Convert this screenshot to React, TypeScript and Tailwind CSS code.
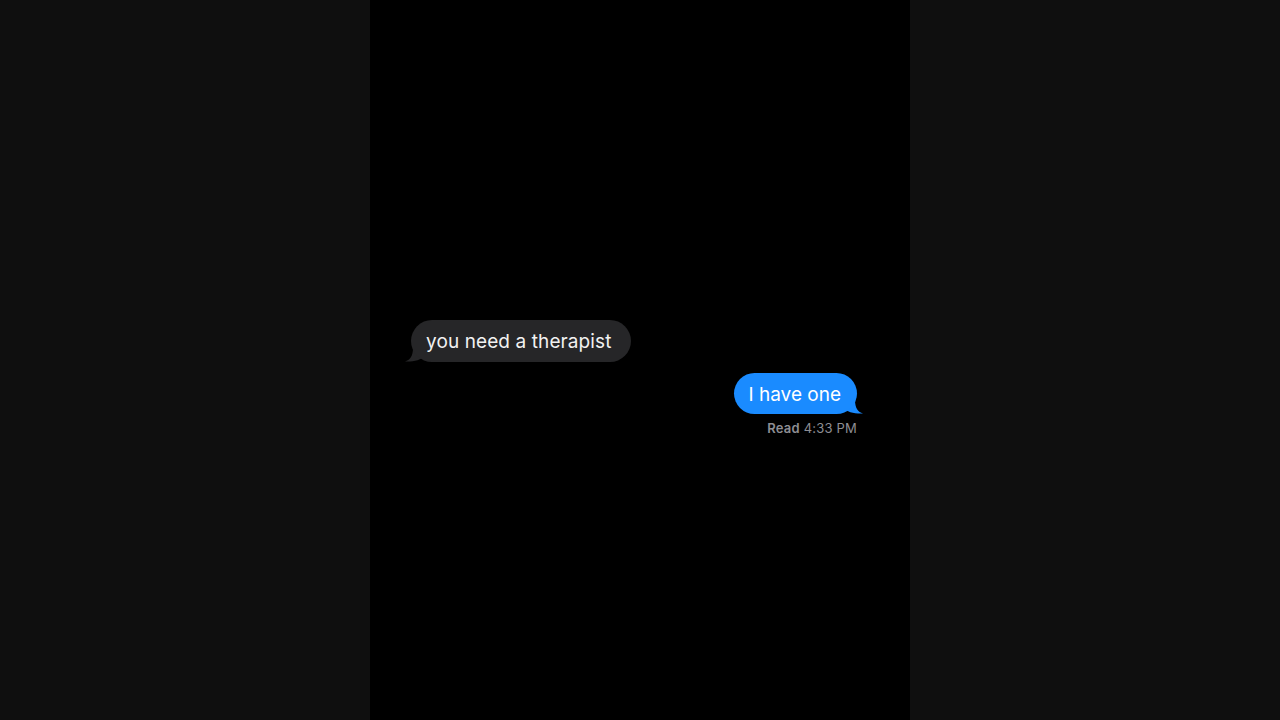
import React from "react";

export default function App() {
  return (
    <div className="flex h-[720px] w-[1280px] bg-[#0f0f0f]" style={{ fontFamily: "Inter, 'Liberation Sans', sans-serif" }}>
      <div className="w-[370px]" />
      <div className="flex w-[540px] flex-col bg-black pt-[320px] pl-[41px] pr-[53px]">
        <div className="relative self-start">
          <div className="relative z-10 flex h-[42px] items-center rounded-[21px] bg-[#262628] pt-[2px] pl-[15px] pr-[20px] text-[19px] tracking-[0.1px] text-[#f2f2f2]">
            you need a therapist
          </div>
          <svg className="absolute bottom-0 left-[-6px]" width="20" height="14" viewBox="0 0 20 14">
            <path d="M20 0 L20 8 C16 12 8 14 0 13.5 C5 12 8 8 8 0 Z" fill="#262628" />
          </svg>
        </div>
        <div className="relative mt-[11px] self-end">
          <div className="relative z-10 flex h-[41px] items-center rounded-[21px] bg-[#1a8bff] pt-[3px] pl-[15px] pr-[16px] text-[19px] text-white">
            I have one
          </div>
          <svg className="absolute bottom-0 right-[-6px]" width="20" height="14" viewBox="0 0 20 14">
            <path d="M0 0 L0 8 C4 12 12 14 20 13.5 C15 12 12 8 12 0 Z" fill="#1a8bff" />
          </svg>
        </div>
        <div className="mt-[5px] self-end text-[13px] tracking-[0.2px] text-[#8e8e93]">
          <span className="font-semibold">Read</span> 4:33 PM
        </div>
      </div>
      <div className="flex-1" />
    </div>
  );
}
